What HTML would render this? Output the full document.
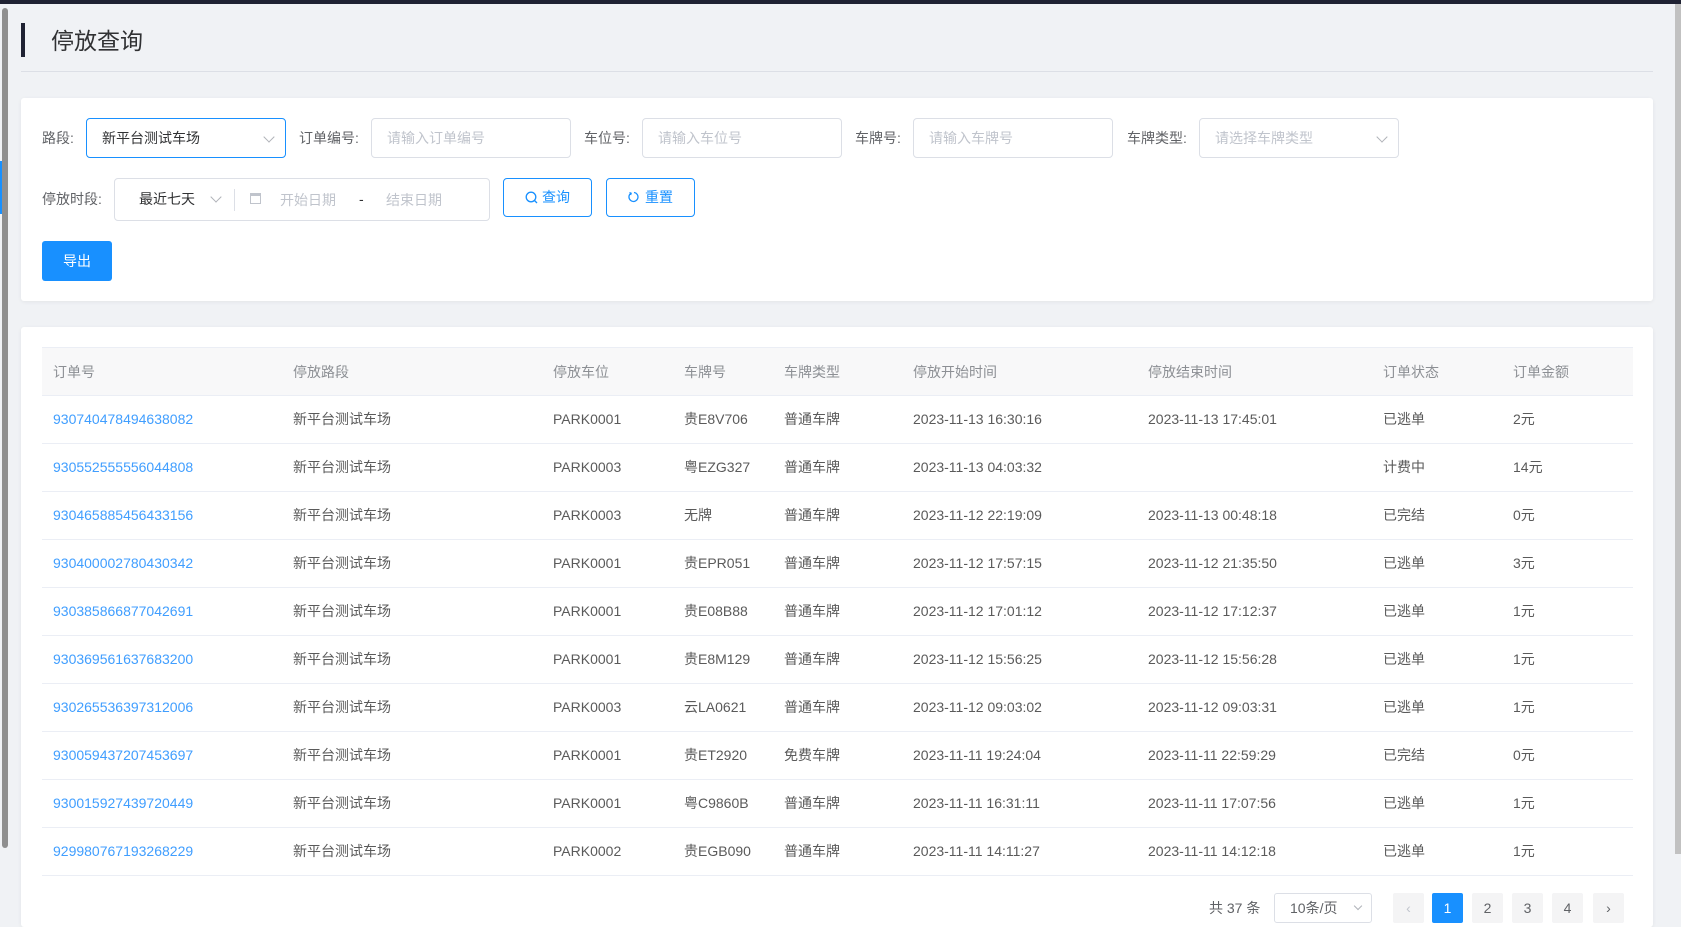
<!DOCTYPE html>
<html><head><meta charset="utf-8">
<style>
*{margin:0;padding:0;box-sizing:border-box}
body{width:1681px;height:913px;overflow:hidden;background:#f0f2f5;font-family:"Liberation Sans","Noto Sans CJK SC",sans-serif;color:#606266;font-size:14px;position:relative}
.a{position:absolute}
.topbar{left:0;top:0;width:1681px;height:4px;background:#1f2233}
.lsb{left:2px;top:8px;width:6px;height:840px;background:#8f8f8f;border-radius:3px}
.rsb{left:1675px;top:4px;width:6px;height:850px;background:#c1c1c1}
.card{background:#fff;border-radius:3px;box-shadow:0 1px 4px rgba(0,0,0,.06)}
.lbl{font-size:14px;color:#606266;line-height:40px}
.inp{border:1px solid #dcdfe6;border-radius:4px;height:40px;line-height:38px;padding-left:15px;color:#c0c4cc;font-size:14px}
.chev{position:absolute;right:12px;top:14px;width:8px;height:8px;border-right:1px solid #b0b3b9;border-bottom:1px solid #b0b3b9;transform:rotate(45deg)}
.btn{border:1px solid #1890ff;border-radius:4px;color:#1890ff;text-align:center;line-height:37px;font-size:14px}
table{border-collapse:collapse;position:absolute;left:42px;top:347px;width:1591px}
th{height:48px;background:#f8f8f9;font-weight:normal;color:#8c8f94;text-align:left;border-top:1px solid #ebeef5;border-bottom:1px solid #ebeef5;font-size:14px}
td{height:48px;border-bottom:1px solid #ebeef5;color:#5a5a5a;font-size:14px;padding-bottom:2px}
th,td{padding-left:11px}
td.l{color:#409eff}
.pg{top:893px;width:31px;height:30px;background:#f4f4f5;border-radius:2px;text-align:center;line-height:30px;color:#606266;font-size:14px}
</style></head><body>
<div class="a topbar"></div>
<div class="a lsb"></div>
<div class="a" style="left:0;top:161px;width:2px;height:53px;background:#1890ff"></div>
<div class="a rsb"></div>
<div class="a" style="left:21px;top:23px;width:4px;height:34px;background:#1f2233"></div>
<div class="a" style="left:51px;top:24px;font-size:23px;color:#303133;line-height:34px">停放查询</div>
<div class="a" style="left:21px;top:71px;width:1632px;height:1px;background:#dcdfe6"></div>

<div class="a card" style="left:21px;top:98px;width:1632px;height:203px"></div>
<div class="a lbl" style="left:42px;top:118px">路段:</div>
<div class="a inp" style="left:86px;top:118px;width:200px;border-color:#1890ff;color:#303133">新平台测试车场<span class="chev"></span></div>
<div class="a lbl" style="left:299px;top:118px">订单编号:</div>
<div class="a inp" style="left:371px;top:118px;width:200px">请输入订单编号</div>
<div class="a lbl" style="left:584px;top:118px">车位号:</div>
<div class="a inp" style="left:642px;top:118px;width:200px">请输入车位号</div>
<div class="a lbl" style="left:855px;top:118px">车牌号:</div>
<div class="a inp" style="left:913px;top:118px;width:200px">请输入车牌号</div>
<div class="a lbl" style="left:1127px;top:118px">车牌类型:</div>
<div class="a inp" style="left:1199px;top:118px;width:200px">请选择车牌类型<span class="chev"></span></div>

<div class="a lbl" style="left:42px;top:179px">停放时段:</div>
<div class="a inp" style="left:114px;top:178px;width:376px;height:43px;padding:0"></div>
<div class="a" style="left:139px;top:178px;line-height:43px;color:#303133">最近七天</div>
<div class="a" style="left:212px;top:193px;width:8px;height:8px;border-right:1px solid #b0b3b9;border-bottom:1px solid #b0b3b9;transform:rotate(45deg)"></div>
<div class="a" style="left:234px;top:189px;width:1px;height:22px;background:#dcdfe6"></div>
<div class="a" style="left:250px;top:193px;width:11px;height:11px;border:1px solid #c0c4cc;border-top-width:3px"></div>
<div class="a" style="left:280px;top:178px;line-height:45px;color:#c0c4cc">开始日期</div>
<div class="a" style="left:359px;top:178px;line-height:43px;color:#303133">-</div>
<div class="a" style="left:386px;top:178px;line-height:45px;color:#c0c4cc">结束日期</div>
<div class="a btn" style="left:503px;top:178px;width:89px;height:39px"><svg width="13" height="13" viewBox="0 0 13 13" style="vertical-align:-2px;margin-right:4px"><circle cx="6" cy="6" r="4.8" fill="none" stroke="#1890ff" stroke-width="1.3"/><path d="M9.5 9.5L12 12" stroke="#1890ff" stroke-width="1.3"/></svg>查询</div>
<div class="a btn" style="left:606px;top:178px;width:89px;height:39px"><svg width="12" height="12" viewBox="0 0 12 12" style="vertical-align:-1px;margin-right:5px"><path d="M3 2.2A4.5 4.5 0 1 0 6 1.5" fill="none" stroke="#1890ff" stroke-width="1.3"/><path d="M1.5 1.5L3.2 2.2L2.6 4" fill="none" stroke="#1890ff" stroke-width="1.2"/></svg>重置</div>
<div class="a" style="left:42px;top:241px;width:70px;height:40px;background:#1890ff;border-radius:3px;color:#fff;text-align:center;line-height:40px">导出</div>

<div class="a card" style="left:21px;top:327px;width:1632px;height:600px"></div>
<table>
<tr><th style="width:240px">订单号</th><th style="width:260px">停放路段</th><th style="width:131px">停放车位</th><th style="width:100px">车牌号</th><th style="width:129px">车牌类型</th><th style="width:235px">停放开始时间</th><th style="width:235px">停放结束时间</th><th style="width:130px">订单状态</th><th>订单金额</th></tr>
<tr><td class="l">930740478494638082</td><td>新平台测试车场</td><td>PARK0001</td><td>贵E8V706</td><td>普通车牌</td><td>2023-11-13 16:30:16</td><td>2023-11-13 17:45:01</td><td>已逃单</td><td>2元</td></tr>
<tr><td class="l">930552555556044808</td><td>新平台测试车场</td><td>PARK0003</td><td>粤EZG327</td><td>普通车牌</td><td>2023-11-13 04:03:32</td><td></td><td>计费中</td><td>14元</td></tr>
<tr><td class="l">930465885456433156</td><td>新平台测试车场</td><td>PARK0003</td><td>无牌</td><td>普通车牌</td><td>2023-11-12 22:19:09</td><td>2023-11-13 00:48:18</td><td>已完结</td><td>0元</td></tr>
<tr><td class="l">930400002780430342</td><td>新平台测试车场</td><td>PARK0001</td><td>贵EPR051</td><td>普通车牌</td><td>2023-11-12 17:57:15</td><td>2023-11-12 21:35:50</td><td>已逃单</td><td>3元</td></tr>
<tr><td class="l">930385866877042691</td><td>新平台测试车场</td><td>PARK0001</td><td>贵E08B88</td><td>普通车牌</td><td>2023-11-12 17:01:12</td><td>2023-11-12 17:12:37</td><td>已逃单</td><td>1元</td></tr>
<tr><td class="l">930369561637683200</td><td>新平台测试车场</td><td>PARK0001</td><td>贵E8M129</td><td>普通车牌</td><td>2023-11-12 15:56:25</td><td>2023-11-12 15:56:28</td><td>已逃单</td><td>1元</td></tr>
<tr><td class="l">930265536397312006</td><td>新平台测试车场</td><td>PARK0003</td><td>云LA0621</td><td>普通车牌</td><td>2023-11-12 09:03:02</td><td>2023-11-12 09:03:31</td><td>已逃单</td><td>1元</td></tr>
<tr><td class="l">930059437207453697</td><td>新平台测试车场</td><td>PARK0001</td><td>贵ET2920</td><td>免费车牌</td><td>2023-11-11 19:24:04</td><td>2023-11-11 22:59:29</td><td>已完结</td><td>0元</td></tr>
<tr><td class="l">930015927439720449</td><td>新平台测试车场</td><td>PARK0001</td><td>粤C9860B</td><td>普通车牌</td><td>2023-11-11 16:31:11</td><td>2023-11-11 17:07:56</td><td>已逃单</td><td>1元</td></tr>
<tr><td class="l">929980767193268229</td><td>新平台测试车场</td><td>PARK0002</td><td>贵EGB090</td><td>普通车牌</td><td>2023-11-11 14:11:27</td><td>2023-11-11 14:12:18</td><td>已逃单</td><td>1元</td></tr>
</table>

<div class="a" style="left:1209px;top:893px;line-height:30px;color:#606266">共 37 条</div>
<div class="a" style="left:1274px;top:893px;width:98px;height:30px;border:1px solid #dcdfe6;border-radius:3px;line-height:28px;padding-left:15px;color:#606266">10条/页<span class="chev" style="top:9px;right:10px;width:6px;height:6px"></span></div>
<div class="a pg" style="left:1393px;color:#c0c4cc">‹</div>
<div class="a pg" style="left:1432px;background:#1890ff;color:#fff">1</div>
<div class="a pg" style="left:1472px">2</div>
<div class="a pg" style="left:1512px">3</div>
<div class="a pg" style="left:1552px">4</div>
<div class="a pg" style="left:1593px">›</div>
</body></html>
